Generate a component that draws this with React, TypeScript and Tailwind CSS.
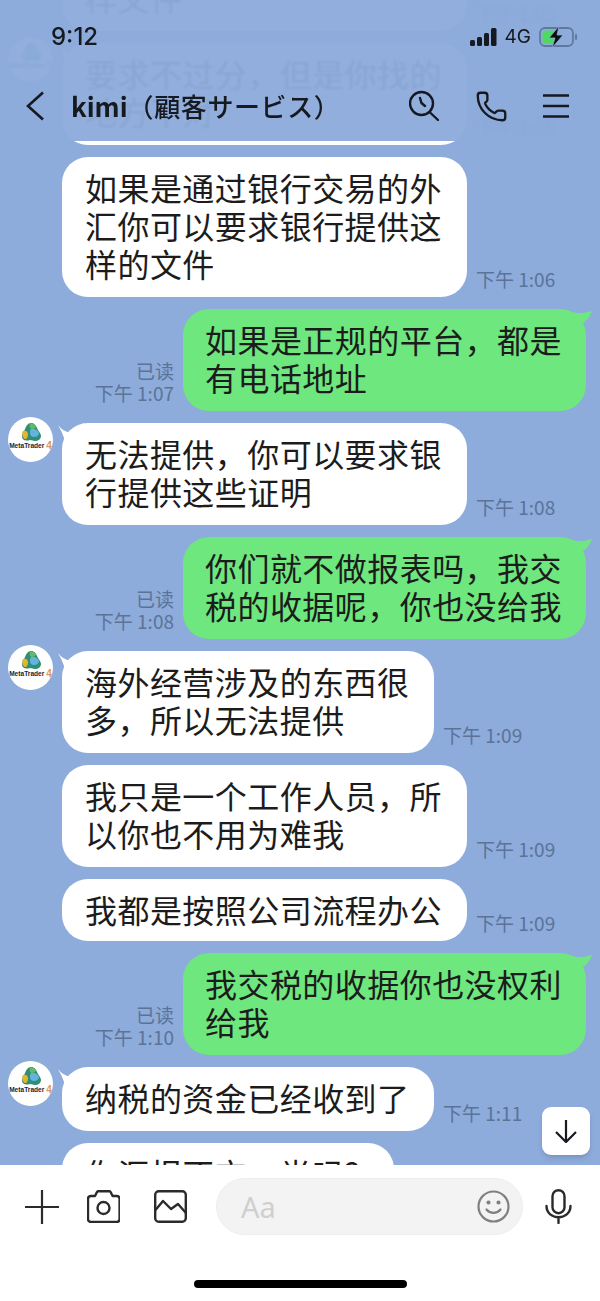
import { Phone } from "lucide-react";

const cjk = { fontFamily: '"Noto Sans CJK SC", "Noto Sans", sans-serif' };
const latin = { fontFamily: "Inter, sans-serif" };

function Avatar() {
  return (
    <div className="w-[45px] h-[45px] rounded-full bg-white flex flex-col items-center shrink-0 overflow-hidden pt-[6px]">
      <svg width="20" height="18" viewBox="0 0 20 18">
        <path d="M10 0c3 0 5 2 6 5s4 5 4 8c0 3-3 5-6 5-2 0-3-1-5-1-3 1-8 1-8-4 0-3 2-4 3-7s3-6 6-6z" fill="#2f8f72" />
        <path d="M2 8c2-1 5 0 5 3s-1 5-3 5-4-6-2-8z" fill="#e4b436" />
        <path d="M10 6c3-1 7 1 8 4 0 2-2 4-5 4s-4-2-4-4 0-3 1-4z" fill="#62b4dc" />
        <path d="M9 1c2-1 5 0 6 2 0 2-2 3-4 3S8 3 9 1z" fill="#63b96b" />
      </svg>
      <div
        className="flex items-end text-[6.6px] leading-[9px] font-bold text-[#20262e] whitespace-nowrap"
        style={{ fontFamily: '"Liberation Sans", sans-serif' }}
      >
        MetaTrader<span className="ml-[2px] text-[#dd9560] text-[10px] leading-[9px]">4</span>
      </div>
    </div>
  );
}

function Received({
  lines,
  time,
  width,
  avatar,
  pb = "pb-[15px]",
}: {
  lines: string[];
  time: string;
  width: string;
  avatar?: boolean;
  pb?: string;
}) {
  return (
    <div className="flex items-end pr-[8px]">
      <div className="w-[62px] shrink-0 self-start pl-[8px] -mt-[6px]">{avatar && <Avatar />}</div>
      <div className={`relative bg-white rounded-[26px] pl-[23px] pt-[11px] ${pb} ${width}`}>
        {avatar && (
          <svg className="absolute -left-[4px] top-0" width="26" height="26" viewBox="0 0 26 26">
            <path d="M0 2C4 7 9 10 14 9 18 8 21 3 26 0V26H9C7 16 4 9 0 2z" fill="#fff" />
          </svg>
        )}
        {lines.map((l) => (
          <div key={l} className="relative text-[32px] leading-[38px] tracking-[0.45px] text-[#1c1c1c] whitespace-nowrap">
            {l}
          </div>
        ))}
      </div>
      <div className="ml-[9px] mb-[6px] text-[19px] leading-[24px] text-[#5b7397] whitespace-nowrap">{time}</div>
    </div>
  );
}

function Sent({ lines, read, time }: { lines: string[]; read: string; time: string }) {
  return (
    <div className="flex items-end justify-end pr-[14px]">
      <div className="mr-[9px] mb-[7px] text-right text-[19px] leading-[22px] text-[#5b7397] whitespace-nowrap">
        <div>{read}</div>
        <div>{time}</div>
      </div>
      <div className="relative bg-[#6ee77e] rounded-[26px] pl-[22px] pt-[11px] pb-[15px] w-[403px]">
        <svg className="absolute -right-[6px] top-[2px]" width="20" height="16" viewBox="0 0 20 16">
          <path d="M0 1C7 3 13 2 20 0 17 8 12 13 3 16z" fill="#6ee77e" />
        </svg>
        {lines.map((l) => (
          <div key={l} className="relative text-[32px] leading-[38px] tracking-[0.45px] text-[#1c1c1c] whitespace-nowrap">
            {l}
          </div>
        ))}
      </div>
    </div>
  );
}

export default function App() {
  return (
    <div className="relative w-[600px] h-[1301px] overflow-hidden bg-[#8dabdb] flex flex-col" style={cjk}>
      {/* messages */}
      <div className="flex-1 min-h-0 overflow-hidden">
        <div className="flex flex-col gap-3 -mt-[33px]">
          <Received lines={["样文件"]} time="下午 1:05" width="w-[405px]" />
          <Received lines={["要求不过分，但是你找的", "地方不对"]} time="下午 1:05" width="w-[405px]" avatar />
          <Received
            lines={["如果是通过银行交易的外", "汇你可以要求银行提供这", "样的文件"]}
            time="下午 1:06"
            width="w-[405px]"
          />
          <Sent lines={["如果是正规的平台，都是", "有电话地址"]} read="已读" time="下午 1:07" />
          <Received lines={["无法提供，你可以要求银", "行提供这些证明"]} time="下午 1:08" width="w-[405px]" avatar />
          <Sent lines={["你们就不做报表吗，我交", "税的收据呢，你也没给我"]} read="已读" time="下午 1:08" />
          <Received lines={["海外经营涉及的东西很", "多，所以无法提供"]} time="下午 1:09" width="w-[372px]" avatar />
          <Received lines={["我只是一个工作人员，所", "以你也不用为难我"]} time="下午 1:09" width="w-[405px]" />
          <Received lines={["我都是按照公司流程办公"]} time="下午 1:09" width="w-[405px]" pb="pb-[13px]" />
          <Sent lines={["我交税的收据你也没权利", "给我"]} read="已读" time="下午 1:10" />
          <Received lines={["纳税的资金已经收到了"]} time="下午 1:11" width="w-[372px]" avatar />
          <Received lines={["你汇报不交，半吗?"]} time="" width="w-[332px]" />
        </div>
      </div>

      {/* status bar and title over the messages */}
      <div className="absolute top-0 left-0 right-0 h-[141px] bg-[#8dabdb]/96 backdrop-blur-[1px] text-[#16191f]">
        <div className="flex items-center justify-between pl-[51px] pr-[23px] pt-[22px] h-[52px]">
          <span className="text-[24px] leading-[30px] font-medium" style={latin}>
            9:12
          </span>
          <div className="flex items-center">
            <svg width="27" height="18" viewBox="0 0 27 18" fill="#16191f">
              <rect x="0" y="12" width="5" height="6" rx="1.5" />
              <rect x="7" y="9" width="5" height="9" rx="1.5" />
              <rect x="14" y="5" width="5" height="13" rx="1.5" />
              <rect x="21" y="0" width="5.5" height="18" rx="1.5" />
            </svg>
            <span className="ml-[8px] text-[19px] leading-[24px]" style={latin}>
              4G
            </span>
            <svg className="ml-[8px]" width="38" height="22" viewBox="0 0 38 22">
              <rect x="1" y="2" width="33" height="18" rx="5" fill="none" stroke="#5f7a9c" strokeWidth="1.8" />
              <rect x="3.5" y="4.5" width="13" height="13" rx="2.5" fill="#4fd964" />
              <rect x="36" y="8" width="2" height="6" rx="1" fill="#5f7a9c" />
              <path d="M20 0 10 12h6l-3 10 11-13h-6z" fill="#0c0e12" stroke="#8dabdb" strokeWidth="0.8" />
            </svg>
          </div>
        </div>
        <div className="flex items-center h-[60px] mt-[24px] pl-[25px] pr-[31px]">
          <svg width="20" height="30" viewBox="0 0 20 30" fill="none" stroke="#16191f" strokeWidth="2.6">
            <path d="M18 1.5 3 15l15 13.5" />
          </svg>
          <div
            className="ml-[26px] text-[26px] leading-[32px] font-medium tracking-[0.6px] whitespace-nowrap"
            style={{ fontFamily: '"Noto Sans CJK JP", "Noto Sans", sans-serif' }}
          >
            <span className="font-bold tracking-normal">kimi</span>（顧客サービス）
          </div>
          <svg className="ml-auto -mt-[2px]" width="30" height="31" viewBox="0 0 30 31" fill="none" stroke="#16191f" strokeWidth="2.4" strokeLinecap="round">
            <circle cx="12.5" cy="13.5" r="11.5" />
            <path d="M20.5 22 29 30M11 8l1.5 5 3.5 3" />
          </svg>
          <Phone className="ml-[36px] text-[#16191f]" size={33} strokeWidth={1.7} />
          <svg className="ml-[35px]" width="26" height="24" viewBox="0 0 26 24" stroke="#16191f" strokeWidth="2.4">
            <path d="M0 1.5h26M0 12h26M0 22.5h26" />
          </svg>
        </div>
      </div>

      {/* scroll to bottom */}
      <button className="absolute left-[542px] top-[1107px] w-[48px] h-[48px] bg-white rounded-[9px] shadow-md flex items-center justify-center">
        <svg width="22" height="23" viewBox="0 0 22 23" fill="none" stroke="#16191f" strokeWidth="2.2">
          <path d="M11 0v21.5M1 12l10 10 10-10" />
        </svg>
      </button>

      {/* composer */}
      <div className="relative h-[136px] shrink-0 bg-white">
        <div className="flex items-center px-[25px] pt-[13px]">
          <svg width="34" height="34" viewBox="0 0 34 34" stroke="#2b2b2b" strokeWidth="2.2">
            <path d="M0 17h34M17 0v34" />
          </svg>
          <svg className="ml-[28px]" width="33" height="33" viewBox="0 0 33 33" fill="none" stroke="#2b2b2b" strokeWidth="2.4" strokeLinejoin="round">
            <path d="M4 6h4l2-4c.3-.5.7-.8 1.3-.8h11c.6 0 1 .3 1.3.8l2 4h4c1.8 0 3 1.300 3 3v20c0 1.800-1.200 3-3 3H4c-1.800 0-3-1.200-3-3V9c0-1.700 1.200-3 3-3z" />
            <circle cx="16.5" cy="18" r="6" />
          </svg>
          <svg className="ml-[34px]" width="33" height="33" viewBox="0 0 33 33" fill="none" stroke="#2b2b2b" strokeWidth="2.4" strokeLinejoin="round">
            <rect x="1.2" y="1.2" width="30.6" height="30.6" rx="3.5" />
            <path d="M1.5 20 9 11l8 8 7-5 8 9" />
          </svg>
          <div className="ml-[29px] w-[307px] h-[57px] rounded-full bg-[#f3f3f3] border border-[#eeeeee] flex items-center pl-[24px] pr-[12px]">
            <span className="text-[29px] text-[#cfcfcf]" style={{ fontFamily: '"Noto Sans", sans-serif' }}>
              Aa
            </span>
            <svg className="ml-auto" width="33" height="33" viewBox="0 0 33 33" fill="none" stroke="#808080" strokeWidth="2.2" strokeLinecap="round">
              <circle cx="16.5" cy="16.5" r="15" />
              <path d="M9.5 19.5c3.5 4.5 10.5 4.5 14 0" />
              <circle cx="11.5" cy="12.5" r="1" fill="#808080" />
              <circle cx="21.5" cy="12.5" r="1" fill="#808080" />
            </svg>
          </div>
          <svg className="ml-[22px]" width="27" height="35" viewBox="0 0 27 35" fill="none" stroke="#2b2b2b" strokeWidth="2.4" strokeLinecap="round">
            <rect x="7.5" y="1.2" width="12" height="23" rx="6" />
            <path d="M1.5 17c0 15 24 15 24 0M13.5 29v5" />
          </svg>
        </div>
        <div className="absolute bottom-[13px] left-[194px] w-[213px] h-[8px] rounded-full bg-black" />
      </div>
    </div>
  );
}
